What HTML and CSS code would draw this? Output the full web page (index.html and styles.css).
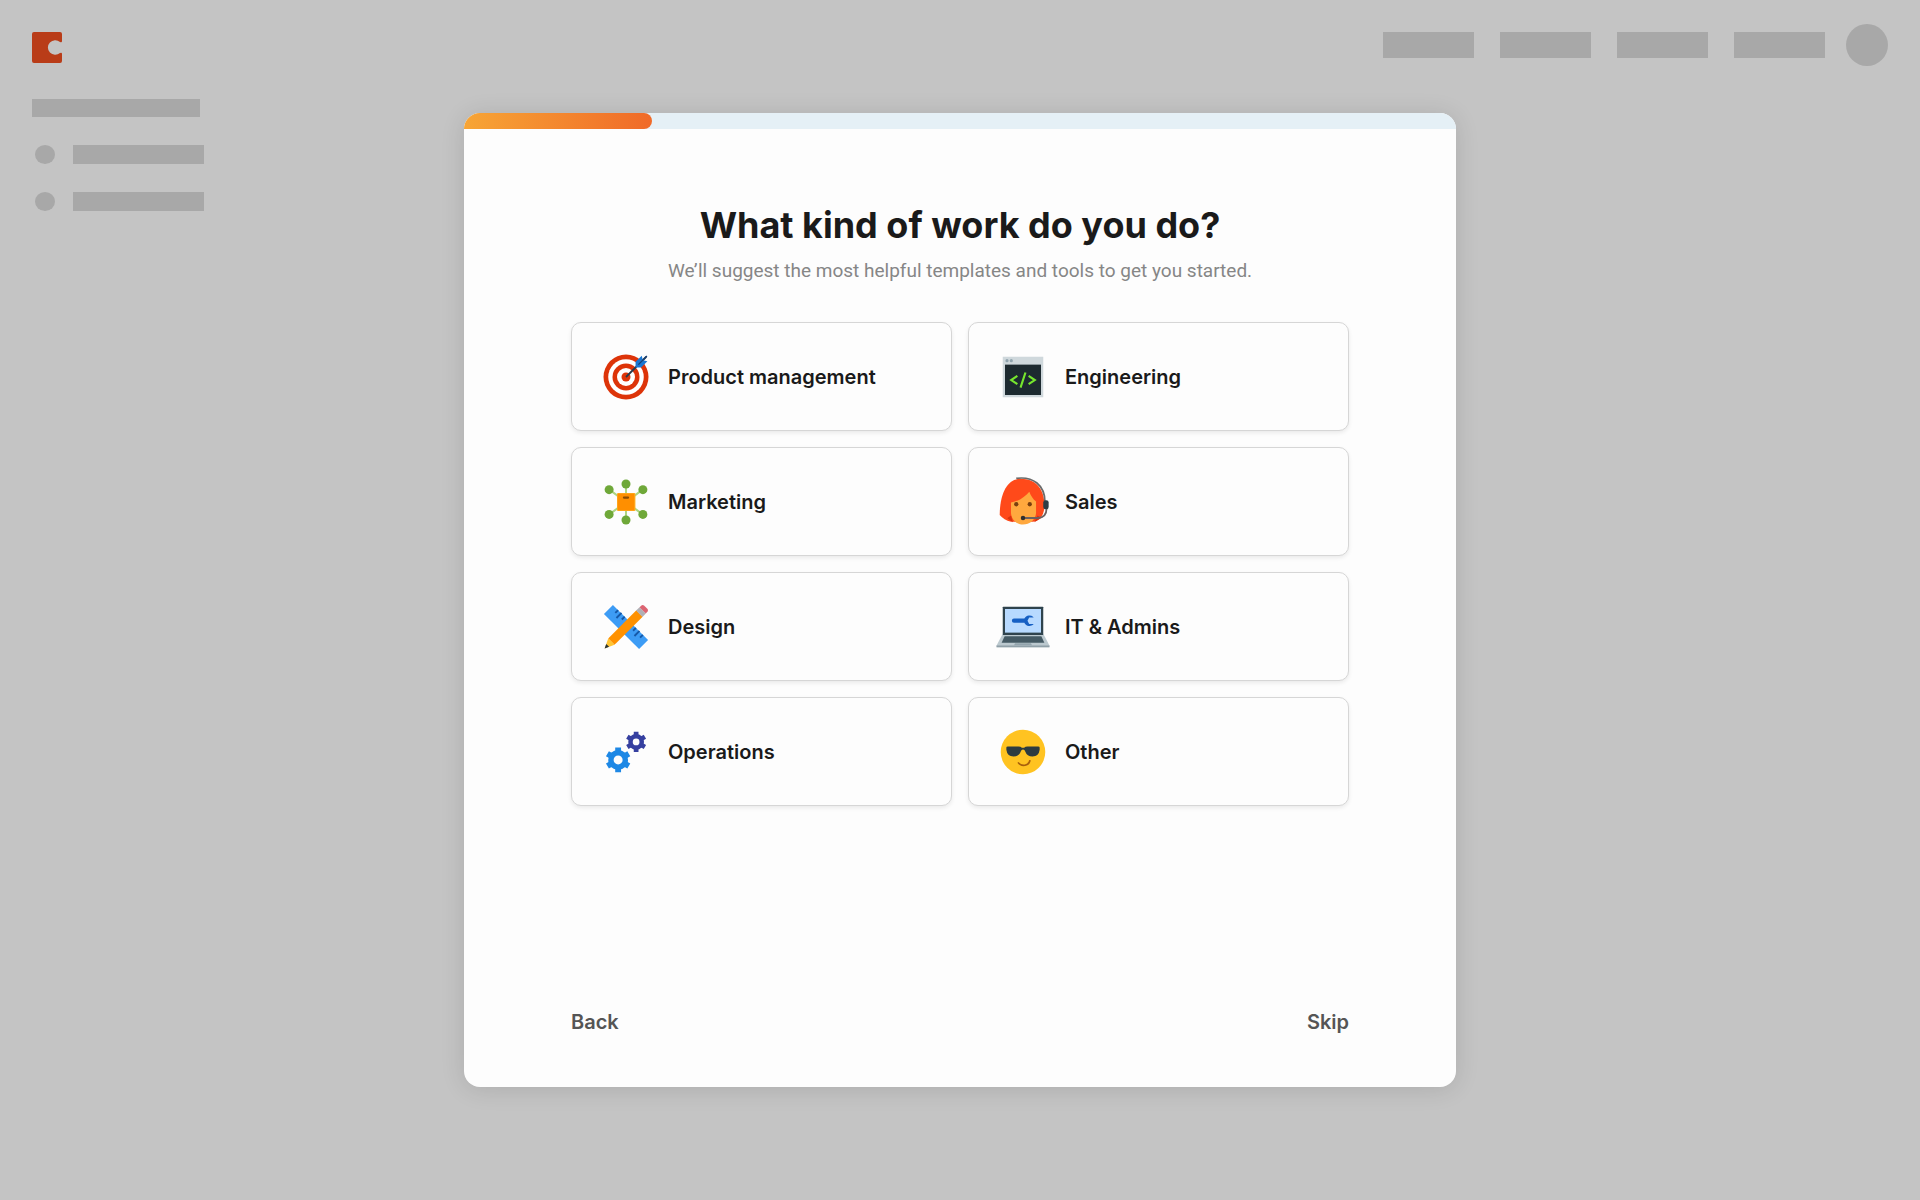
FILE: index.html
```
<!DOCTYPE html>
<html lang="en">
<head>
    <meta charset="utf-8">
    <meta name="viewport" content="width=device-width, initial-scale=1">
    <title>What kind of work do you do?</title>
    <link rel="stylesheet" href="styles.css">
</head>
<body>
    <div class="page">
        <header class="topbar">
            <svg class="logo" viewBox="0 0 30 31">
                <path d="M2 0H28Q30 0 30 2V9Q30 11 28 10A7.3 7.3 0 1 0 28 21Q30 20 30 22V29Q30 31 28 31H2Q0 31 0 29V2Q0 0 2 0Z" fill="#b93c18"/>
            </svg>
            <div class="nav">
                <span class="nav-item"></span>
                <span class="nav-item"></span>
                <span class="nav-item"></span>
                <span class="nav-item"></span>
                <span class="avatar"></span>
            </div>
        </header>
        <aside class="sidebar">
            <div class="side-title"></div>
            <div class="side-row"><span class="dot"></span><span class="bar"></span></div>
            <div class="side-row"><span class="dot"></span><span class="bar"></span></div>
        </aside>
    </div>

    <div class="overlay">
        <main class="modal">
            <div class="progress">
                <div class="progress-fill" style="width: 19%"></div>
            </div>

            <div class="content">
                <h1 class="title">What kind of work do you do?</h1>
                <p class="subtitle">We’ll suggest the most helpful templates and tools to get you started.</p>

                <div class="options">
                    <button class="option" type="button">
                        <svg class="icon" viewBox="0 0 48 48">
                            <circle cx="24" cy="24" r="20" fill="#dd3409"/>
                            <circle cx="24" cy="24" r="15.8" fill="#fff"/>
                            <circle cx="24" cy="24" r="12" fill="#dd3409"/>
                            <circle cx="24" cy="24" r="8" fill="#fff"/>
                            <circle cx="24" cy="24" r="4" fill="#dd3409"/>
                            <path d="M24 24L42 6" stroke="#26384a" stroke-width="1.6"/>
                            <path d="M32.5 15.5V10.5L38 5L39 9L43 10L37.5 15.5Z" fill="#1976d2"/>
                            <path d="M35 13L42.6 5.4" stroke="#173f73" stroke-width="1.2"/>
                        </svg>
                        <span>Product management</span>
                    </button>
                    <button class="option" type="button">
                        <svg class="icon" viewBox="0 0 48 48">
                            <rect x="6" y="6" width="36" height="36" fill="#cfd8dc"/>
                            <rect x="8" y="13" width="32" height="27" fill="#1d2a30"/>
                            <circle cx="9.8" cy="9.5" r="1.4" fill="#90a4ae"/>
                            <circle cx="13.6" cy="9.5" r="1.4" fill="#90a4ae"/>
                            <path d="M19 23L13.5 26.7L19 30.4M29 23L34.5 26.7L29 30.4M26.2 20L21.800 33.5" fill="none" stroke="#76e62e" stroke-width="1.900"/>
                        </svg>
                        <span>Engineering</span>
                    </button>
                    <button class="option" type="button">
                        <svg class="icon" viewBox="0 0 48 48">
                            <path d="M24 8V40M9.2 13L38.8 35M38.8 13L9.2 35" stroke="#aed581" stroke-width="1.8"/>
                            <g fill="#6fa839">
                                <circle cx="24" cy="8" r="4"/>
                                <circle cx="24" cy="40" r="4"/>
                                <circle cx="9" cy="13" r="4"/>
                                <circle cx="39" cy="13" r="4"/>
                                <circle cx="9" cy="35" r="4"/>
                                <circle cx="39" cy="35" r="4"/>
                            </g>
                            <rect x="16" y="16" width="16.4" height="16" rx="1" fill="#ffb52e"/>
                            <rect x="16.5" y="16.5" width="15" height="15" fill="#ff8f00"/>
                            <rect x="21.2" y="19.2" width="5.6" height="1.8" rx="0.9" fill="#8a4b00"/>
                        </svg>
                        <span>Marketing</span>
                    </button>
                    <button class="option" type="button">
                        <svg class="icon" viewBox="0 0 48 48">
                            <path d="M3.3 35.5C3.5 16 10 3.3 22 3.3C36 3.3 43 13 43 27C43 36 39 40.5 33 41.5H13.3Q7 40 3.3 35.5Z" fill="#ff4a1a"/>
                            <path d="M13.3 24.5C21 23 26 19 29.6 14.8C31 18.5 33 21.5 35.6 23.5V34C35 40 30 44 24 44C18 44 13.3 39 13.3 33Z" fill="#ffa83e"/>
                            <path d="M10 38.5L15 42L13.3 36ZM37 36L34 42L40 38.5Z" fill="#d8330e"/>
                            <circle cx="18" cy="26" r="1.9" fill="#7a3f10"/>
                            <circle cx="30" cy="26" r="1.9" fill="#7a3f10"/>
                            <path d="M18 3C33 1 43.5 9 43.5 24" fill="none" stroke="#6b6b6b" stroke-width="1.5"/>
                            <path d="M45 29C45 36 41 38.2 37 38.2H24" fill="none" stroke="#6b6060" stroke-width="1.6"/>
                            <rect x="42" y="22.5" width="4.8" height="8" rx="2" fill="#2f3e46"/>
                            <circle cx="24" cy="38.2" r="2" fill="#33302c"/>
                        </svg>
                        <span>Sales</span>
                    </button>
                    <button class="option" type="button">
                        <svg class="icon" viewBox="0 0 48 48">
                            <path d="M12.4 4.4L43.6 35.6L35.6 43.6L4.4 12.4Z" fill="#3d9cf5"/>
                            <path d="M17 9L14.5 11.5M20 11.5L15.5 16M22.8 14.8L20.3 17.3M32.8 24.8L30.3 27.3M36 27.5L31.5 32M39 31L36.5 33.5" stroke="#1558a8" stroke-width="1.7"/>
                            <path d="M33.2 9.2L38.8 14.8L13.8 39.8L8.2 34.2Z" fill="#ff9100"/>
                            <path d="M36 6.4L33 9.4L38.6 15L41.6 12Z" fill="#b0b0b5"/>
                            <path d="M36 6.4L38 4.6Q39 4 40 4.8L43.2 8Q44 9 43.2 10.2L41.6 12Z" fill="#dc6472"/>
                            <path d="M8.2 34.2L13.8 39.8L5 43Z" fill="#ffc533"/>
                            <path d="M6.4 39L9 41.6L5 43Z" fill="#26323a"/>
                        </svg>
                        <span>Design</span>
                    </button>
                    <button class="option" type="button">
                        <svg class="icon" viewBox="0 0 48 48">
                            <path d="M6 30H42L47.5 40.5V42H0.5V40.5Z" fill="#bcc9cf"/>
                            <path d="M0.5 40.5H47.5V42H0.5Z" fill="#90a0a8"/>
                            <rect x="6" y="6" width="36" height="25" rx="0.5" fill="#2f434d"/>
                            <rect x="8" y="8" width="32" height="21" fill="#b8daff"/>
                            <path d="M7.7 32.2H40.3L43 38H5Z" fill="#455a64"/>
                            <path d="M17 38.5H31L32 40.2H16Z" fill="#93a4ad"/>
                            <path d="M16 16.5H25.2A5 5 0 0 1 33.5 15.5H29.5L28 18.4L29.5 21.3H33.5A5 5 0 0 1 25.2 20.3H16A1.9 1.9 0 0 1 16 16.5Z" fill="#1660c4"/>
                        </svg>
                        <span>IT &amp; Admins</span>
                    </button>
                    <button class="option" type="button">
                        <svg class="icon" viewBox="0 0 48 48">
                            <g stroke="#3640a0" fill="none">
                                <circle cx="33" cy="15" r="5" stroke-width="4"/>
                                <path d="M33 6V10.5M33 19.5V24M25.2 10.5L29 12.7M37 17.3L40.8 19.5M25.2 19.5L29 17.3M37 12.7L40.8 10.5" stroke-width="4.2"/>
                            </g>
                            <g stroke="#1e88e5" fill="none">
                                <circle cx="17" cy="31" r="6.4" stroke-width="4.8"/>
                                <path d="M17 20V25M17 37V42M7.5 25.5L11.8 28M22.2 34L26.5 36.5M7.5 36.5L11.8 34M22.2 28L26.5 25.5" stroke-width="5.2"/>
                            </g>
                        </svg>
                        <span>Operations</span>
                    </button>
                    <button class="option" type="button">
                        <svg class="icon" viewBox="0 0 48 48">
                            <circle cx="24" cy="24" r="19.8" fill="#ffc321"/>
                            <path d="M9.2 20Q9.2 19 10.5 19H20Q22 19 23 20.3H25Q26 19 28 19H37.5Q38.8 19 38.8 20V22Q38 28 32.5 28Q27.5 28 26 23.5Q25.5 21.7 24 21.7Q22.5 21.7 22 23.5Q20.5 28 15.5 28Q10 28 9.2 22Z" fill="#2d3b40"/>
                            <path d="M19.6 33.2C22.5 37.5 29.5 36.5 30.2 31.2" fill="none" stroke="#a8600c" stroke-width="1.5"/>
                        </svg>
                        <span>Other</span>
                    </button>
                </div>

                <div class="actions">
                    <button class="link-btn" type="button">Back</button>
                    <button class="link-btn" type="button">Skip</button>
                </div>
            </div>
        </main>
    </div>
</body>
</html>
```
FILE: styles.css
```
* {
    margin: 0;
    padding: 0;
    box-sizing: border-box;
}

body {
    background-color: #c4c4c4;
    font-family: Inter, "Liberation Sans", sans-serif;
    color: #1a1a1a;
}

/* placeholder page behind the dialog */
.page {
    position: absolute;
    top: 0;
    left: 0;
    width: 100%;
}

.topbar {
    display: flex;
    justify-content: space-between;
    align-items: flex-start;
    padding: 24px 32px 0;
}

.logo {
    width: 30px;
    height: 31px;
    margin-top: 8px;
}

.nav {
    display: flex;
    align-items: center;
    gap: 26px;
}

.nav-item {
    width: 91px;
    height: 26px;
    background-color: #a8a8a8;
}

.avatar {
    width: 42px;
    height: 42px;
    margin-left: -5px;
    border-radius: 50%;
    background-color: #a8a8a8;
}

.sidebar {
    display: flex;
    flex-direction: column;
    gap: 28px;
    padding: 33px 32px;
}

.side-title {
    width: 168px;
    height: 18px;
    background-color: #a8a8a8;
}

.side-row {
    display: flex;
    align-items: center;
    gap: 18px;
    padding-left: 3px;
}

.dot {
    width: 20px;
    height: 19px;
    border-radius: 50%;
    background-color: #a8a8a8;
}

.bar {
    width: 131px;
    height: 19px;
    background-color: #a8a8a8;
}

/* dialog */
.overlay {
    position: relative;
    display: flex;
    justify-content: center;
    min-height: 100vh;
    padding: 113px 24px;
}

.modal {
    display: flex;
    flex-direction: column;
    width: 100%;
    max-width: 992px;
    border-radius: 16px;
    background-color: #fdfdfd;
    box-shadow: 0 2px 24px rgba(0, 0, 0, 0.12);
    overflow: hidden;
}

.progress {
    height: 16px;
    background-color: #e5f0f6;
}

.progress-fill {
    height: 16px;
    border-radius: 0 8px 8px 0;
    background: linear-gradient(to right, #f7a535, #f06a28);
}

.content {
    flex: 1;
    display: flex;
    flex-direction: column;
    padding: 72px 107px 51px;
}

.title {
    font-size: 36px;
    line-height: 48px;
    font-weight: 700;
    text-align: center;
}

.subtitle {
    margin-top: 8px;
    font-family: Roboto, sans-serif;
    font-size: 19px;
    line-height: 28px;
    color: #868686;
    text-align: center;
}

.options {
    display: grid;
    grid-template-columns: 1fr 1fr;
    gap: 16px;
    margin-top: 37px;
}

.option {
    display: flex;
    align-items: center;
    gap: 15px;
    height: 109px;
    padding: 0 27px;
    border: 1px solid #d6d6d6;
    border-radius: 10px;
    background-color: #fdfdfd;
    box-shadow: 0 2px 4px rgba(0, 0, 0, 0.08);
    color: #1a1a1a;
    font-family: inherit;
    font-size: 20px;
    font-weight: 600;
    cursor: pointer;
}

.icon {
    width: 54px;
    height: 54px;
}

.actions {
    display: flex;
    justify-content: space-between;
    margin-top: auto;
    padding-top: 48px;
}

.link-btn {
    border: none;
    background: none;
    color: #555;
    font-family: inherit;
    font-size: 20px;
    line-height: 28px;
    font-weight: 600;
    cursor: pointer;
}
```
